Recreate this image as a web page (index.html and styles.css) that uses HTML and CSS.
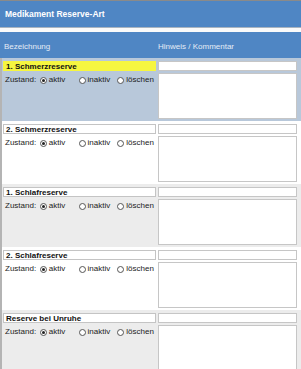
FILE: index.html
```html
<!DOCTYPE html>
<html>
<head>
    <meta name="viewport" content="width=device-width, initial-scale=1.0">
    <title>Medikament Reserve-Art</title>
    <link rel="stylesheet" href="styles.css">
</head>
<body>
    <div class="title">Medikament Reserve-Art</div>
    <div class="spacer"></div>
    <div class="colhead">
        <span>Bezeichnung</span>
        <span>Hinweis / Kommentar</span>
    </div>

    <div class="entry selected">
        <div class="name active">1. Schmerzreserve</div>
        <div class="field"></div>
        <div class="state">
            <span class="lbl">Zustand:</span>
            <span class="opt"><i class="radio on"></i>aktiv</span>
            <span class="opt"><i class="radio"></i>inaktiv</span>
            <span class="opt"><i class="radio"></i>löschen</span>
        </div>
        <div class="memo"></div>
    </div>

    <div class="entry">
        <div class="name">2. Schmerzreserve</div>
        <div class="field"></div>
        <div class="state">
            <span class="lbl">Zustand:</span>
            <span class="opt"><i class="radio on"></i>aktiv</span>
            <span class="opt"><i class="radio"></i>inaktiv</span>
            <span class="opt"><i class="radio"></i>löschen</span>
        </div>
        <div class="memo"></div>
    </div>

    <div class="entry alt">
        <div class="name">1. Schlafreserve</div>
        <div class="field"></div>
        <div class="state">
            <span class="lbl">Zustand:</span>
            <span class="opt"><i class="radio on"></i>aktiv</span>
            <span class="opt"><i class="radio"></i>inaktiv</span>
            <span class="opt"><i class="radio"></i>löschen</span>
        </div>
        <div class="memo"></div>
    </div>

    <div class="entry">
        <div class="name">2. Schlafreserve</div>
        <div class="field"></div>
        <div class="state">
            <span class="lbl">Zustand:</span>
            <span class="opt"><i class="radio on"></i>aktiv</span>
            <span class="opt"><i class="radio"></i>inaktiv</span>
            <span class="opt"><i class="radio"></i>löschen</span>
        </div>
        <div class="memo"></div>
    </div>

    <div class="entry alt">
        <div class="name">Reserve bei Unruhe</div>
        <div class="field"></div>
        <div class="state">
            <span class="lbl">Zustand:</span>
            <span class="opt"><i class="radio on"></i>aktiv</span>
            <span class="opt"><i class="radio"></i>inaktiv</span>
            <span class="opt"><i class="radio"></i>löschen</span>
        </div>
        <div class="memo"></div>
    </div>
</body>
</html>
```
FILE: styles.css
```css
body {
    font-family: "Liberation Sans", Arial, sans-serif;
    font-size: 8px;
    margin: 0;
    padding: 0;
    background-color: #ececec;
    color: #222;
}

.title {
    background-color: #4f86c4;
    color: #fff;
    font-weight: bold;
    font-size: 8.5px;
    height: 26px;
    line-height: 27px;
    padding-left: 5px;
    border-top: 1px solid #8a8a8a;
    border-bottom: 1px solid #a9b4c0;
}

.spacer {
    height: 4px;
    background-color: #fafafa;
}

.colhead {
    display: grid;
    grid-template-columns: 154px 140px;
    background-color: #4f86c4;
    color: #e4ecf6;
    height: 26px;
    line-height: 30px;
    padding-left: 4px;
}

.entry {
    display: grid;
    grid-template-columns: 153px 139px;
    column-gap: 2px;
    row-gap: 2px;
    grid-template-rows: 10px 46px;
    padding: 3px 5px 2px 1px;
    background-color: #fff;
    border-left: 2px solid #b4b4b4;
}

.entry.selected {
    background-color: #b8c8da;
}

.entry.alt {
    background-color: #ececec;
}

.name {
    background-color: #fff;
    border: 1px solid #c4c4c4;
    font-weight: bold;
    line-height: 9px;
    padding-left: 2px;
    color: #111;
}

.name.active {
    background-color: #f6f640;
    border-color: #f6f640;
}

.field,
.memo {
    background-color: #fff;
    border: 1px solid #c6c6c6;
}

.state {
    display: flex;
    align-items: flex-start;
    padding-top: 3px;
    padding-left: 2px;
    line-height: 8px;
    color: #222;
}

.lbl {
    width: 35px;
}

.opt {
    display: flex;
    align-items: center;
    width: 39px;
}

.radio {
    display: inline-block;
    box-sizing: border-box;
    width: 7px;
    height: 7px;
    border: 1px solid #555;
    border-radius: 50%;
    background-color: #fff;
    margin-right: 2px;
    position: relative;
}

.radio.on::after {
    content: "";
    position: absolute;
    left: 1px;
    top: 1px;
    width: 3px;
    height: 3px;
    border-radius: 50%;
    background-color: #222;
}
```
